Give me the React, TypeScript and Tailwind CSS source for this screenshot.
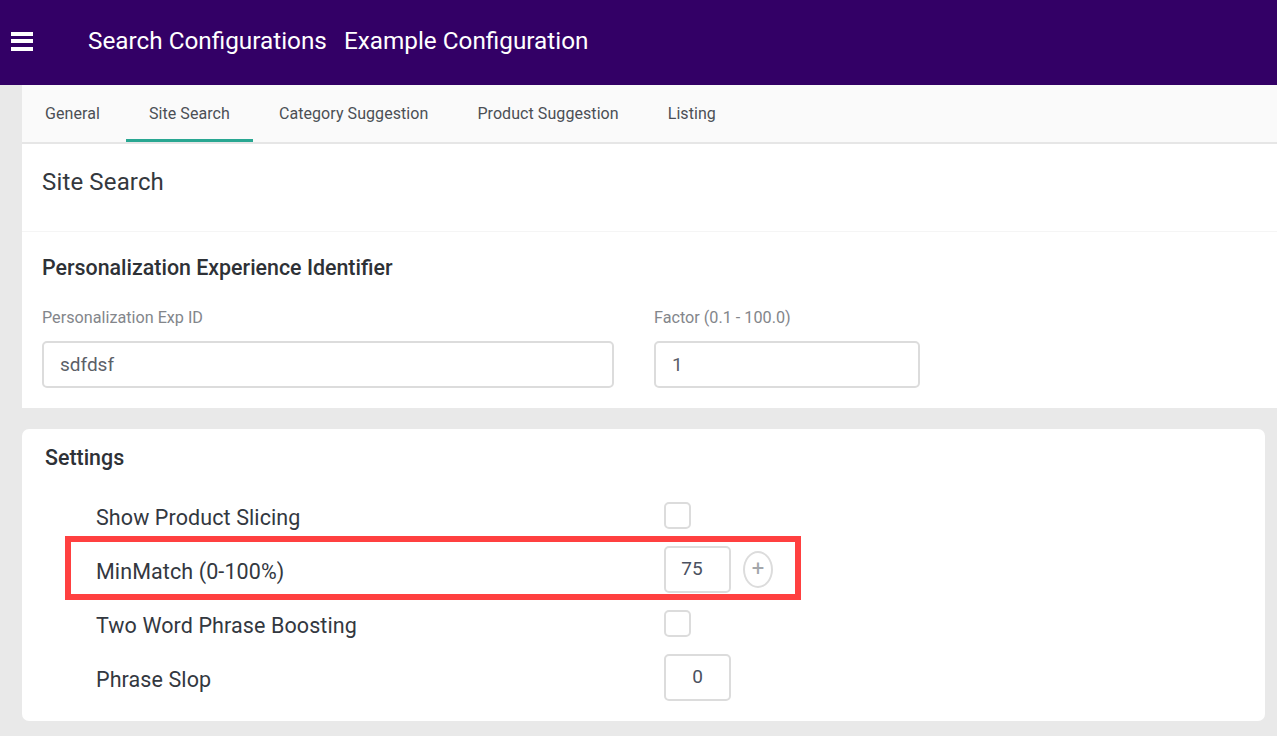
import React from "react";

const font = { fontFamily: "Roboto, sans-serif" };

const tabs = ["General", "Site Search", "Category Suggestion", "Product Suggestion", "Listing"];

function SmallBox({ value, className }: { value: string; className?: string }) {
  return (
    <div className={`w-[67px] h-[47px] flex items-center justify-center rounded-[5px] border-2 border-[#dcdcdc] text-[19px] text-[#4a5160] bg-white ${className ?? ""}`}>
      {value}
    </div>
  );
}

function Check() {
  return <div className="w-[27px] h-[27px] rounded-[5px] border-2 border-[#dcdcdc] bg-white" />;
}

function SettingRow({ label, children }: { label: string; children: React.ReactNode }) {
  return (
    <div className="h-[54px] flex items-center">
      <div className="w-[568px] pt-[6px] text-[21.5px] text-[#33383f] tracking-[0.1px]">{label}</div>
      {children}
    </div>
  );
}

export default function App() {
  return (
    <div style={font} className="w-[1277px] h-[736px] overflow-hidden bg-[#e9e9e9]">
      <header className="h-[85px] bg-[#330066] flex items-center text-white">
        <div className="w-[88px] pl-[11px]">
          <div className="w-[22px] flex flex-col gap-[3.5px] pb-[3px]">
            <div className="h-[4px] bg-white" />
            <div className="h-[4px] bg-white" />
            <div className="h-[4px] bg-white" />
          </div>
        </div>
        <h1 className="text-[24.3px] leading-none pb-[3px]">Search Configurations</h1>
        <h2 className="text-[24.3px] leading-none pb-[3px] ml-[17px]">Example Configuration</h2>
      </header>

      <main className="pl-[22px]">
        <nav className="h-[59px] bg-[#fafafa] border-b-2 border-[#e6e6e6] flex">
          {tabs.map((tab) => (
            <div
              key={tab}
              className={`h-[57px] px-[23px] pt-[4px] mr-[3px] flex items-center text-[16px] text-[#4b4f55] tracking-[0.07px] border-b-[3px] ${
                tab === "Site Search" ? "border-[#29a792]" : "border-transparent"
              }`}
            >
              {tab}
            </div>
          ))}
        </nav>

        <section className="h-[88px] bg-white border-b border-[#f5f5f5] pl-[20px] pt-[23px]">
          <h2 className="text-[24px] leading-[30px] text-[#34383d] tracking-[0.15px]">Site Search</h2>
        </section>

        <section className="h-[176px] bg-white pl-[20px] pt-[22px]">
          <h3 className="text-[21.4px] leading-[28px] font-medium text-[#2e3136]">
            Personalization Experience Identifier
          </h3>
          <div className="flex mt-[26px] gap-[40px]">
            <div className="w-[572px]">
              <label className="block text-[16.2px] leading-[20px] text-[#83868b]">Personalization Exp ID</label>
              <div className="mt-[13px] h-[47px] rounded-[5px] border-2 border-[#dcdcdc] flex items-center pl-[16px] pt-[2px] text-[19px] text-[#5b6067]">
                sdfdsf
              </div>
            </div>
            <div className="w-[266px]">
              <label className="block text-[16.2px] leading-[20px] text-[#83868b]">Factor (0.1 - 100.0)</label>
              <div className="mt-[13px] h-[47px] rounded-[5px] border-2 border-[#dcdcdc] flex items-center pl-[16px] pt-[2px] text-[19px] text-[#5b6067]">
                1
              </div>
            </div>
          </div>
        </section>

        <section className="mt-[21px] w-[1243px] h-[292px] bg-white rounded-[7px] pl-[23px] pt-[15px]">
          <h3 className="text-[21.4px] leading-[28px] font-medium text-[#2e3136]">Settings</h3>
          <div className="mt-[16px] pl-[51px] relative">
            <SettingRow label="Show Product Slicing">
              <Check />
            </SettingRow>
            <SettingRow label="MinMatch (0-100%)">
              <SmallBox value="75" className="pr-[11px]" />
              <div className="ml-[12px] w-[30px] h-[37px] rounded-[50%] border-2 border-[#dcdcdc] flex items-center justify-center text-[22px] leading-none text-[#a3a6aa]">
                +
              </div>
            </SettingRow>
            <SettingRow label="Two Word Phrase Boosting">
              <Check />
            </SettingRow>
            <SettingRow label="Phrase Slop">
              <SmallBox value="0" />
            </SettingRow>
            <div className="absolute left-[20px] top-[48px] w-[736px] h-[64px] border-[6px] border-[#ff4040] pointer-events-none" />
          </div>
        </section>
      </main>
    </div>
  );
}
